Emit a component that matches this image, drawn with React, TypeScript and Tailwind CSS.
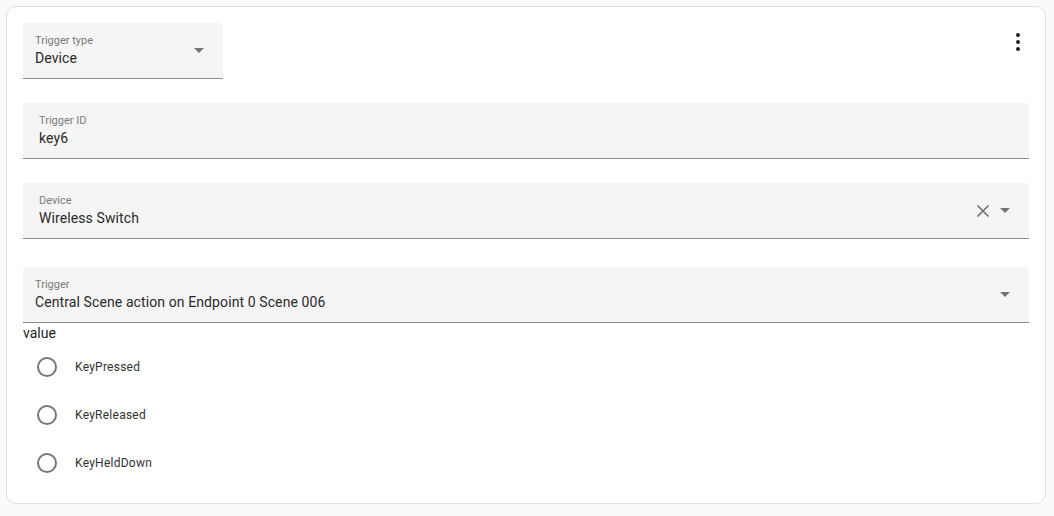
import React from "react";

function Arrow() {
  return (
    <svg width="10" height="5" viewBox="0 0 10 5" className="shrink-0">
      <path d="M0 0 L5 5 L10 0 Z" fill="#757575" />
    </svg>
  );
}

function Field({
  label,
  value,
  padX,
  width,
  arrow,
  clear,
}: {
  label: string;
  value: string;
  padX: string;
  width?: string;
  arrow?: boolean;
  clear?: boolean;
}) {
  return (
    <div
      className={`${width ?? "w-full"} h-[56px] bg-[#f5f5f5] rounded-t-[4px] border-b border-[#8c8c8c] flex items-center ${padX}`}
    >
      <div className="flex-1 flex flex-col pt-[1px]">
        <span className="text-[11px] leading-[14px] text-[#7a7a7a]">{label}</span>
        <span className="text-[14px] leading-[20px] tracking-[0.1px] text-[#2a2a2a]">{value}</span>
      </div>
      {clear && (
        <svg width="14" height="14" viewBox="0 0 14 14" className="mr-[10px]">
          <path d="M1.5 1.5 L12.5 12.5 M12.5 1.5 L1.5 12.5" stroke="#6f6f6f" strokeWidth="1.6" />
        </svg>
      )}
      {arrow && <Arrow />}
    </div>
  );
}

function Radio({ label }: { label: string }) {
  return (
    <div className="h-[48px] flex items-center pl-[14px]">
      <div className="w-[20px] h-[20px] rounded-full border-2 border-[#777]" />
      <span className="ml-[18px] text-[12px] tracking-[0.25px] text-[#333]">{label}</span>
    </div>
  );
}

export default function App() {
  return (
    <div
      className="w-[1054px] h-[516px] bg-[#fafafa] p-[6px]"
      style={{ fontFamily: "Roboto, 'Noto Sans', sans-serif" }}
    >
      <div className="relative w-[1040px] h-[498px] bg-white border border-[#e0e0e0] rounded-[10px] p-[16px]">
        <div className="absolute right-[25px] top-[26px] flex flex-col gap-[3px] items-center">
          <div className="w-[4px] h-[4px] rounded-full bg-[#222]" />
          <div className="w-[4px] h-[4px] rounded-full bg-[#222]" />
          <div className="w-[4px] h-[4px] rounded-full bg-[#222]" />
        </div>
        <Field label="Trigger type" value="Device" padX="pl-[12px] pr-[19px]" width="w-[200px]" arrow />
        <div className="h-[24px]" />
        <Field label="Trigger ID" value="key6" padX="px-[16px]" />
        <div className="h-[24px]" />
        <Field label="Device" value="Wireless Switch" padX="pl-[16px] pr-[19px]" arrow clear />
        <div className="h-[28px]" />
        <Field label="Trigger" value="Central Scene action on Endpoint 0 Scene 006" padX="pl-[12px] pr-[19px]" arrow />
        <div className="text-[14px] leading-[20px] text-[#222]">value</div>
        <Radio label="KeyPressed" />
        <Radio label="KeyReleased" />
        <Radio label="KeyHeldDown" />
      </div>
    </div>
  );
}
